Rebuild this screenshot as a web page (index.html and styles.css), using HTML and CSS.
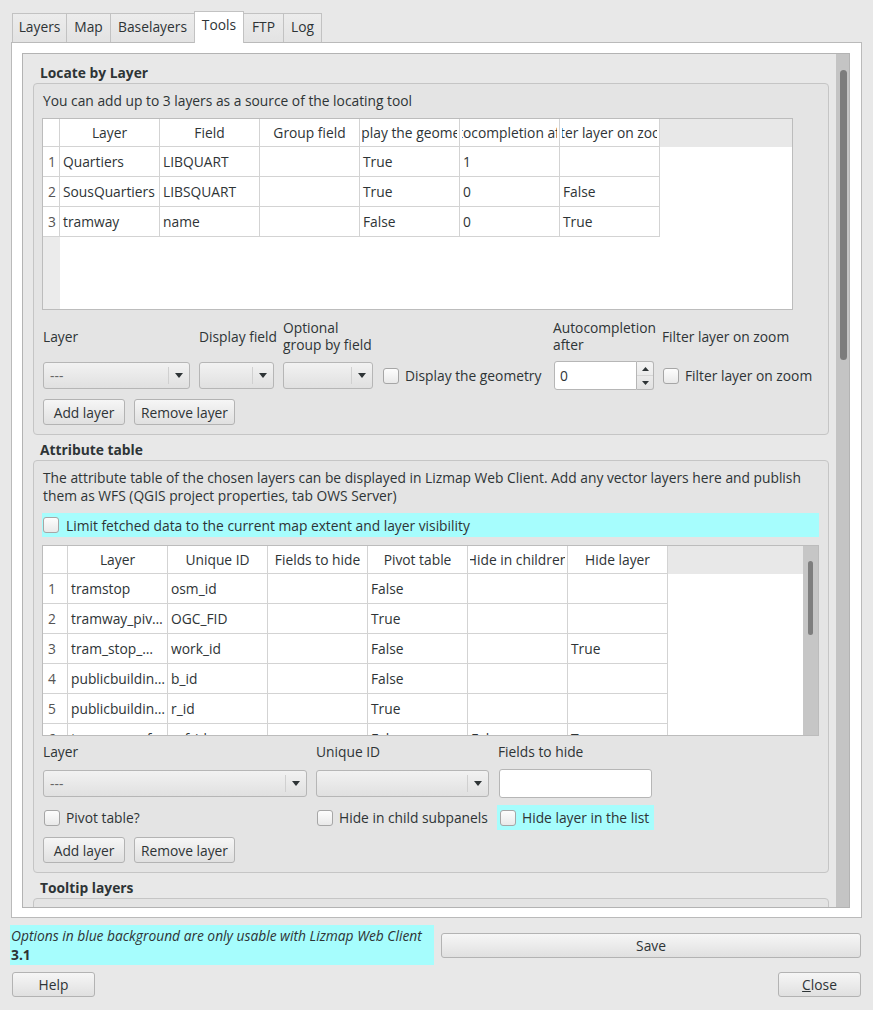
FILE: index.html
```html
<!DOCTYPE html>
<html>
<head>
<meta charset="utf-8">
<link rel="stylesheet" href="styles.css">
</head>
<body>
<div class="tabs">
  <div class="tab t-layers">Layers</div>
  <div class="tab t-map">Map</div>
  <div class="tab t-base">Baselayers</div>
  <div class="tab t-tools active">Tools</div>
  <div class="tab t-ftp">FTP</div>
  <div class="tab t-log">Log</div>
</div>
<div class="panel">
  <div class="scroll">
    <div class="scroll-content">
      <div class="gtitle">Locate by Layer</div>
      <div class="group">
        <div class="desc">You can add up to 3 layers as a source of the locating tool</div>
        <div class="tbl tbl1">
          <div class="tbody">
            <div class="trow hdr">
              <div class="vh"></div>
              <div class="hc"><div class="hcl"><span>Layer</span></div></div>
              <div class="hc"><div class="hcl"><span>Field</span></div></div>
              <div class="hc"><div class="hcl"><span>Group field</span></div></div>
              <div class="hc"><div class="hcl"><span>Display the geometry</span></div></div>
              <div class="hc"><div class="hcl"><span>Autocompletion after</span></div></div>
              <div class="hc"><div class="hcl"><span>Filter layer on zoom</span></div></div>
            </div>
            <div class="trow">
              <div class="vh">1</div><div class="c">Quartiers</div><div class="c">LIBQUART</div><div class="c"></div><div class="c">True</div><div class="c">1</div><div class="c"></div>
            </div>
            <div class="trow">
              <div class="vh">2</div><div class="c">SousQuartiers</div><div class="c">LIBSQUART</div><div class="c"></div><div class="c">True</div><div class="c">0</div><div class="c">False</div>
            </div>
            <div class="trow">
              <div class="vh">3</div><div class="c">tramway</div><div class="c">name</div><div class="c"></div><div class="c">False</div><div class="c">0</div><div class="c">True</div>
            </div>
          </div>
        </div>
        <div class="form1">
          <div class="lbl">Layer</div>
          <div class="lbl">Display field</div>
          <div class="lbl">Optional<br>group by field</div>
          <div></div>
          <div class="lbl">Autocompletion<br>after</div>
          <div class="lbl">Filter layer on zoom</div>

          <div class="combo"><span class="ctext">---</span><span class="arrow"><svg width="8" height="5" viewBox="0 0 8 5"><polygon points="0,0 8,0 4,5" fill="#2e3436"/></svg></span></div>
          <div class="combo"><span class="ctext"></span><span class="arrow"><svg width="8" height="5" viewBox="0 0 8 5"><polygon points="0,0 8,0 4,5" fill="#2e3436"/></svg></span></div>
          <div class="combo"><span class="ctext"></span><span class="arrow"><svg width="8" height="5" viewBox="0 0 8 5"><polygon points="0,0 8,0 4,5" fill="#2e3436"/></svg></span></div>
          <div class="chk"><span class="cb"></span>Display the geometry</div>
          <div class="spin">
            <div class="spin-in">0</div>
            <div class="spin-btns">
              <div class="sb"><svg width="7" height="4" viewBox="0 0 7 4"><polygon points="0,4 7,4 3.5,0" fill="#2e3436"/></svg></div>
              <div class="sb"><svg width="7" height="4" viewBox="0 0 7 4"><polygon points="0,0 7,0 3.5,4" fill="#2e3436"/></svg></div>
            </div>
          </div>
          <div class="chk"><span class="cb"></span>Filter layer on zoom</div>
        </div>
        <div class="btns">
          <button class="btn b-add">Add layer</button>
          <button class="btn b-rem">Remove layer</button>
        </div>
      </div>

      <div class="gtitle gt-next">Attribute table</div>
      <div class="group">
        <div class="desc">The attribute table of the chosen layers can be displayed in Lizmap Web Client. Add any vector layers here and publish<br>them as WFS (QGIS project properties, tab OWS Server)</div>
        <div class="cyanbar"><span class="cb"></span>Limit fetched data to the current map extent and layer visibility</div>
        <div class="tbl tbl2">
          <div class="tbody">
            <div class="trow hdr">
              <div class="vh"></div>
              <div class="hc"><div class="hcl"><span>Layer</span></div></div>
              <div class="hc"><div class="hcl"><span>Unique ID</span></div></div>
              <div class="hc"><div class="hcl"><span>Fields to hide</span></div></div>
              <div class="hc"><div class="hcl"><span>Pivot table</span></div></div>
              <div class="hc"><div class="hcl"><span>Hide in children</span></div></div>
              <div class="hc"><div class="hcl"><span>Hide layer</span></div></div>
            </div>
            <div class="trow"><div class="vh">1</div><div class="c">tramstop</div><div class="c">osm_id</div><div class="c"></div><div class="c">False</div><div class="c"></div><div class="c"></div></div>
            <div class="trow"><div class="vh">2</div><div class="c">tramway_piv…</div><div class="c">OGC_FID</div><div class="c"></div><div class="c">True</div><div class="c"></div><div class="c"></div></div>
            <div class="trow"><div class="vh">3</div><div class="c">tram_stop_…</div><div class="c">work_id</div><div class="c"></div><div class="c">False</div><div class="c"></div><div class="c">True</div></div>
            <div class="trow"><div class="vh">4</div><div class="c">publicbuildin…</div><div class="c">b_id</div><div class="c"></div><div class="c">False</div><div class="c"></div><div class="c"></div></div>
            <div class="trow"><div class="vh">5</div><div class="c">publicbuildin…</div><div class="c">r_id</div><div class="c"></div><div class="c">True</div><div class="c"></div><div class="c"></div></div>
            <div class="trow"><div class="vh">6</div><div class="c">tramway_ref</div><div class="c">ref_id</div><div class="c"></div><div class="c">False</div><div class="c">False</div><div class="c">True</div></div>
          </div>
          <div class="tscroll"><div class="tthumb"></div></div>
        </div>
        <div class="form2">
          <div class="lbl">Layer</div>
          <div class="lbl">Unique ID</div>
          <div class="lbl">Fields to hide</div>

          <div class="combo"><span class="ctext">---</span><span class="arrow"><svg width="8" height="5" viewBox="0 0 8 5"><polygon points="0,0 8,0 4,5" fill="#2e3436"/></svg></span></div>
          <div class="combo"><span class="ctext"></span><span class="arrow"><svg width="8" height="5" viewBox="0 0 8 5"><polygon points="0,0 8,0 4,5" fill="#2e3436"/></svg></span></div>
          <div class="lineedit"></div>

          <div class="chk"><span class="cb"></span>Pivot table?</div>
          <div class="chk"><span class="cb"></span>Hide in child subpanels</div>
          <div class="chk cyanchk"><span class="cb"></span>Hide layer in the list</div>
        </div>
        <div class="btns btns2">
          <button class="btn b-add">Add layer</button>
          <button class="btn b-rem">Remove layer</button>
        </div>
      </div>

      <div class="gtitle gt-next">Tooltip layers</div>
      <div class="group g-cut"></div>
    </div>
    <div class="vscroll"><div class="vthumb"></div></div>
  </div>
</div>
<div class="bottom">
  <div class="note"><i>Options in blue background are only usable with Lizmap Web Client</i><br><b>3.1</b></div>
  <button class="btn save">Save</button>
</div>
<div class="footer">
  <button class="btn fbtn">Help</button>
  <button class="btn fbtn"><u>C</u>lose</button>
</div>
</body>
</html>
```

FILE: styles.css
```css
* { box-sizing: border-box; }

body {
  margin: 0;
  width: 873px;
  height: 1010px;
  overflow: hidden;
  background: #e8e8e8;
  font-family: "Open Sans", "Noto Sans", sans-serif;
  font-size: 13.8px;
  color: #2e3436;
}

/* Tabs */
.tabs {
  display: flex;
  align-items: flex-end;
  height: 42px;
  padding-left: 12px;
  position: relative;
  z-index: 2;
}
.tab {
  height: 29px;
  margin-left: -1px;
  border: 1px solid #c2c2c2;
  border-bottom: none;
  background: linear-gradient(#ececec, #e3e3e3);
  display: flex;
  align-items: center;
  justify-content: center;
  padding-bottom: 3px;
  color: #2e3436;
}
.t-layers { width: 55px; margin-left: 0; }
.t-map { width: 45px; }
.t-base { width: 85px; }
.t-tools { width: 50px; }
.t-ftp { width: 41px; }
.t-log { width: 39px; }
.tab.active {
  height: 32px;
  margin-bottom: -1px;
  background: #fff;
  padding-bottom: 7px;
  position: relative;
  z-index: 3;
}

/* Panel */
.panel {
  margin-left: 11px;
  width: 851px;
  height: 876px;
  border: 1px solid #bababa;
  background: #fff;
  padding: 10px 11px 9px 10px;
}
.scroll {
  display: flex;
  height: 855px;
  border: 1px solid #b3b3b3;
  background: #e8e8e8;
  overflow: hidden;
}
.scroll-content {
  flex: 1;
  min-width: 0;
  padding: 10px 7px 0 10px;
}
.vscroll {
  flex: none;
  width: 13px;
  background: #c4c4c4;
  padding-top: 16px;
  padding-left: 4px;
}
.vthumb {
  width: 7px;
  height: 290px;
  border-radius: 4px;
  background: #7c7c7c;
}

/* Group boxes */
.gtitle {
  font-weight: bold;
  line-height: 18px;
  padding-left: 7px;
  margin-bottom: 1px;
}
.gt-next { margin-top: 6px; }
.group {
  border: 1px solid #c5c5c5;
  border-radius: 4px;
  background: #e4e4e4;
  padding: 8px 9px 9px 9px;
}
.g-cut { height: 40px; }
.desc { line-height: 18px; white-space: nowrap; }

/* Tables */
.tbl {
  display: flex;
  border: 1px solid #bcbcbc;
  overflow: hidden;
  margin-left: -1px;
}
.tbody {
  flex: 1;
  min-width: 0;
  overflow: hidden;
}
.tbl1 {
  margin-top: 8px;
  width: 751px;
  height: 192px;
  background: linear-gradient(to right, #ebebeb 17px, #fff 17px);
}
.tbl2 {
  margin-top: 8px;
  width: 777px;
  height: 191px;
  background: linear-gradient(to right, #ebebeb 25px, #fff 25px);
}
.trow {
  display: flex;
  height: 30px;
  flex: none;
}
.trow.hdr {
  height: 28px;
  background: #e8e8e8;
}
.vh {
  flex: none;
  width: 17px;
  background: #fff;
  border-right: 1px solid #d3d3d3;
  border-bottom: 1px solid #d3d3d3;
  display: flex;
  align-items: center;
  padding-left: 5px;
  color: #555;
}
.tbl2 .vh { width: 25px; padding-left: 5px; }
.hc {
  flex: none;
  width: 100px;
  background: #fff;
  border-right: 1px solid #d3d3d3;
  border-bottom: 1px solid #d3d3d3;
  display: flex;
  align-items: center;
  padding: 0 2px;
}
.hcl {
  flex: 1;
  min-width: 0;
  display: flex;
  justify-content: center;
  overflow: hidden;
  white-space: nowrap;
}
.hcl span { flex: none; }
.c {
  flex: none;
  width: 100px;
  background: #fff;
  border-right: 1px solid #d3d3d3;
  border-bottom: 1px solid #d3d3d3;
  display: flex;
  align-items: center;
  padding-left: 3px;
  overflow: hidden;
  white-space: nowrap;
}
.tscroll {
  flex: none;
  width: 15px;
  background: #c6c6c6;
  padding-top: 15px;
  padding-left: 5px;
}
.tthumb {
  width: 5px;
  height: 74px;
  border-radius: 3px;
  background: #7e7e7e;
}

/* Form controls */
.form1 {
  display: grid;
  grid-template-columns: 147px 75px 90px 162px 100px auto;
  grid-template-rows: 36px 27px;
  column-gap: 9px;
  row-gap: 8px;
  align-items: center;
  margin-top: 8px;
}
.form2 {
  display: grid;
  grid-template-columns: 264px 173px 154px;
  grid-template-rows: 18px 27px 25px;
  column-gap: 9px;
  row-gap: 9px;
  align-items: center;
  margin-top: 6px;
}
.form2 .combo { margin-top: 2px; }
.lbl { line-height: 17px; white-space: nowrap; }
.combo {
  height: 27px;
  border: 1px solid #b6b6b6;
  border-radius: 3px;
  background: linear-gradient(#f2f2f2, #e0e0e0);
  display: flex;
  align-items: center;
  padding-left: 6px;
}
.ctext { flex: 1; color: #666; }
.arrow {
  flex: none;
  width: 21px;
  height: 17px;
  border-left: 1px solid #d0d0d0;
  display: flex;
  align-items: center;
  justify-content: center;
}
.chk {
  display: flex;
  align-items: center;
  gap: 6px;
  white-space: nowrap;
  padding-left: 1px;
}
.cb {
  flex: none;
  width: 16px;
  height: 16px;
  border: 1px solid #a6a6a6;
  border-radius: 3px;
  background: linear-gradient(#fdfdfd, #e9e9e9);
}
.spin {
  display: flex;
  width: 100px;
  height: 29px;
  margin-left: 1px;
}
.spin-in {
  flex: 1;
  background: #fff;
  border: 1px solid #b6b6b6;
  border-radius: 3px 0 0 3px;
  display: flex;
  align-items: center;
  padding-left: 5px;
}
.spin-btns {
  flex: none;
  width: 17px;
  border: 1px solid #b6b6b6;
  border-left: none;
  border-radius: 0 3px 3px 0;
  background: linear-gradient(#f4f4f4, #e2e2e2);
  display: flex;
  flex-direction: column;
}
.sb {
  flex: 1;
  display: flex;
  align-items: center;
  justify-content: center;
}
.sb + .sb { border-top: 1px solid #d6d6d6; }
.lineedit {
  height: 29px;
  margin-left: 1px;
  margin-top: 1px;
  background: #fff;
  border: 1px solid #b6b6b6;
  border-radius: 3px;
}
.cyanchk {
  background: #a6fdfd;
  height: 25px;
  margin-left: -1px;
  margin-right: -2px;
  padding-left: 3px;
}
.cyanbar {
  margin-top: 8px;
  margin-left: -1px;
  width: 777px;
  height: 24px;
  background: #a6fdfd;
  display: flex;
  align-items: center;
  gap: 7px;
  padding-left: 1px;
}

/* Buttons */
.btn {
  font-family: inherit;
  font-size: 13.8px;
  color: #2e3436;
  border: 1px solid #b3b3b3;
  border-radius: 3px;
  background: linear-gradient(#f6f6f6, #e0e0e0);
  padding: 0;
  height: 26px;
}
.btns {
  display: flex;
  gap: 9px;
  margin-top: 10px;
}
.btns2 { margin-top: 7px; }
.b-add { width: 82px; }
.b-rem { width: 101px; }

/* Bottom */
.bottom {
  display: flex;
  align-items: center;
  gap: 7px;
  margin: 7px 12px 0 10px;
}
.note {
  flex: none;
  width: 424px;
  height: 40px;
  background: #a6fdfd;
  padding: 1px 1px 0 1px;
  line-height: 19px;
  white-space: nowrap;
  overflow: hidden;
}
.save {
  flex: 1;
  height: 25px;
}
.footer {
  display: flex;
  justify-content: space-between;
  margin: 7px 12px 0 12px;
}
.fbtn {
  width: 83px;
  height: 25px;
}
```
